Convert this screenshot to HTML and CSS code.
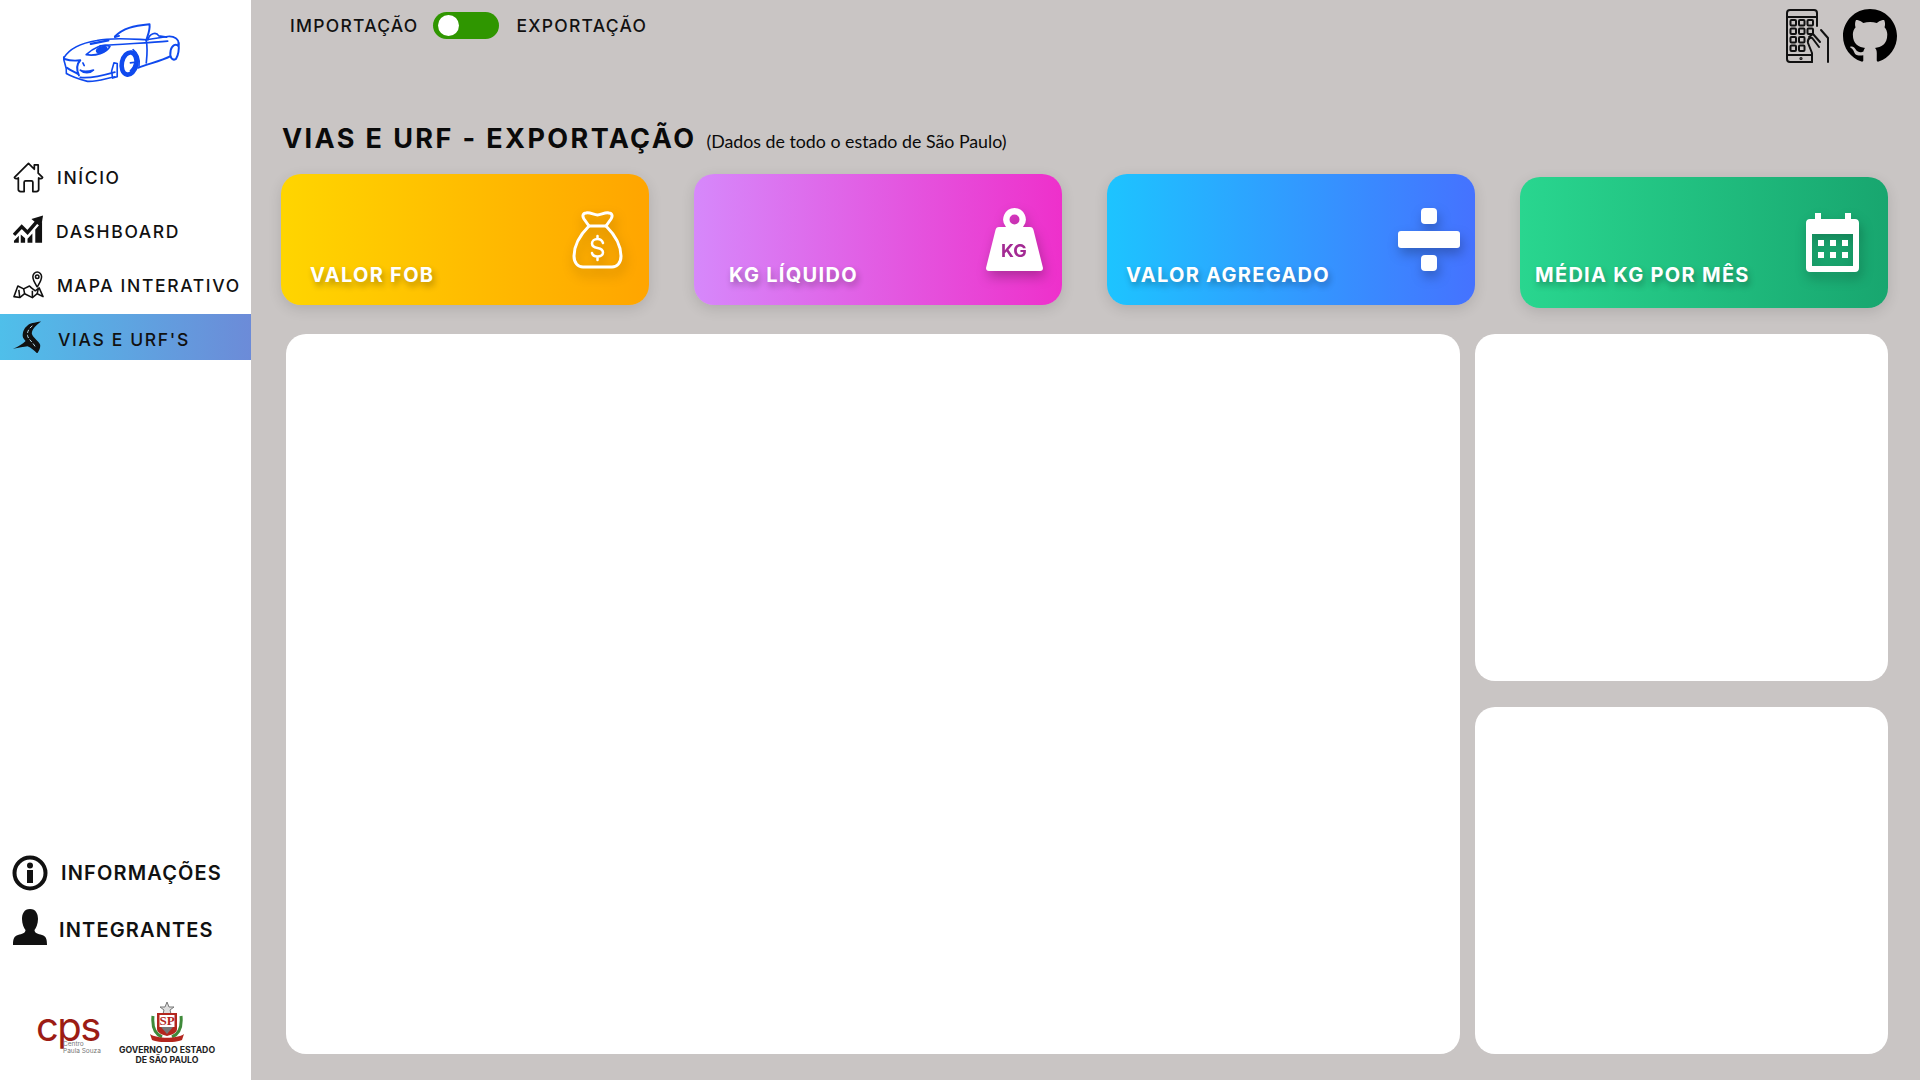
FILE: index.html
```html
<!DOCTYPE html>
<html lang="pt-BR">
<head>
  <meta charset="UTF-8">
  <title>Vias e URF's</title>
  <link rel="stylesheet" href="styles.css">
</head>
<body>
  <aside class="sidebar">
    <div class="brand">
      <svg class="car" viewBox="180 60 370 200" fill="none" stroke="#0f49ee" stroke-width="5" stroke-linecap="round" stroke-linejoin="round">
        <path d="M190 175C205 150 240 130 290 122C340 112 400 118 440 120L505 110C525 108 540 118 538 135"/>
        <path d="M190 172C188 190 200 195 198 222C215 232 240 240 262 246C290 248 320 236 345 232"/>
        <path d="M345 110C370 85 400 78 450 73C452 90 445 105 440 122" stroke-width="6"/>
        <path d="M345 112L358 108M445 120C450 100 470 95 478 108L502 112"/>
        <path d="M440 122C445 150 442 170 440 190"/>
        <path d="M300 138C360 132 450 130 505 124M400 150C420 165 420 185 418 200"/>
        <path d="M415 205C450 192 490 182 512 170" stroke-width="6"/>
        <path d="M538 130C540 150 535 170 530 178C518 185 510 172 514 152C518 136 530 130 538 140" stroke-width="6"/>
        <ellipse cx="388" cy="192" rx="22" ry="34" transform="rotate(12 388 192)" stroke-width="14"/>
        <path d="M392 190L405 188C405 200 398 208 392 214" stroke-width="5"/>
        <path d="M258 165C280 145 310 130 330 140C320 160 285 170 258 165Z"/>
        <ellipse cx="305" cy="150" rx="16" ry="8" fill="#0f49ee" transform="rotate(-20 305 150)"/>
        <path d="M272 132L325 122" stroke-width="7"/>
        <path d="M192 178C210 184 225 184 240 182C228 195 228 210 236 228M200 205C215 215 225 218 234 224" stroke-width="6"/>
        <path d="M240 212C250 222 270 222 280 212C265 216 250 218 240 212ZM248 190L252 198"/>
        <path d="M335 215L342 190L352 192L352 232L338 236Z"/>
        <path d="M240 234C270 238 310 228 345 218"/>
      </svg>
    </div>

    <nav class="menu">
      <a class="menu-item">
        <svg class="menu-icon" viewBox="0 0 32 32" fill="none" stroke="#111" stroke-width="1.8" stroke-linejoin="round" stroke-linecap="round">
          <path d="M1.500 16.500L16 2L22 8V3.500H26V12L30.500 16.500C30 18 28 18 26.500 17V29C26.500 30.500 25.500 31 24 31H20.500V21.500C20.500 20.500 20 20 19 20H13C12 20 11.500 20.500 11.500 21.500V31H8C6.500 31 5.500 30.500 5.500 29V17C4 18 2 18 1.500 16.500Z"/>
        </svg>
        <span>INÍCIO</span>
      </a>
      <a class="menu-item dash">
        <svg class="menu-icon" viewBox="0 0 32 32" fill="#111">
          <path d="M1 20L9 11.500L15 17.500L24 7" fill="none" stroke="#111" stroke-width="3.500"/>
          <path d="M19 3.500L31 0L29 12Z"/>
          <path d="M1 26L6 21V28H1ZM8 19.500L12.500 23.500V28H8ZM15 24L20 18.500V28H15ZM23 14.500L30 6.500V28H23Z"/>
        </svg>
        <span>DASHBOARD</span>
      </a>
      <a class="menu-item">
        <svg class="menu-icon" viewBox="0 0 32 32" fill="none" stroke="#111" stroke-width="1.600" stroke-linejoin="round">
          <path d="M1 28L5 17L11 20L17 17L19 19L23 22L27 19L31 28L25 25L20 29L12 25L7 29Z"/>
          <path d="M11 20L12 25M20 22L20 29M6 21L7 29M26 20L25 25"/>
          <path d="M25 18C22 13 20.500 11 20.500 7.500C20.500 5 22.500 2.500 25 2.500C27.500 2.500 29.500 5 29.500 7.500C29.500 11 28 13 25 18Z"/>
          <circle cx="25" cy="7.500" r="1.800"/>
        </svg>
        <span>MAPA INTERATIVO</span>
      </a>
      <a class="menu-item active">
        <svg class="menu-icon" viewBox="0 0 32 32" fill="#111">
          <path d="M29 0C22 1 17 2 15 4C11 7 10 11 10 15C10 17 12 19 13 20C10 23 5 26 0 28C6 27 11 26 15 25.500C19 27 22 30 25 33C27 30 28.500 27 28 24C27 21 21 17 19.500 13C19 9 23 4 29 0Z"/>
          <path d="M20 4.500C16 7.500 14.500 11 15 14.500C15.500 18 20 21 23 26" fill="none" stroke="#bfe3f5" stroke-width="1" stroke-dasharray="3.500 2"/>
        </svg>
        <span>VIAS E URF'S</span>
      </a>
    </nav>

    <nav class="menu-bottom">
      <a class="menu-item big">
        <svg class="big-icon" viewBox="0 0 36 36">
          <circle cx="18" cy="18" r="15.500" fill="none" stroke="#111" stroke-width="4"/>
          <circle cx="18" cy="10.500" r="3" fill="#111"/>
          <rect x="15" y="15" width="6" height="13" fill="#111"/>
        </svg>
        <span>INFORMAÇÕES</span>
      </a>
      <a class="menu-item big person">
        <svg class="big-icon" viewBox="0 0 36 36" fill="#111">
          <path d="M18 0C24 0 26 5 26 10C26 15 24 19 22.500 21C22.500 24 26 25 30 26C34 27 35 30 35 36H1C1 30 2 27 6 26C10 25 13.500 24 13.500 21C12 19 10 15 10 10C10 5 12 0 18 0Z"/>
        </svg>
        <span>INTEGRANTES</span>
      </a>
    </nav>

    <div class="partners">
      <div class="cps">
        <span class="cps-mark">cps</span>
        <span class="cps-name">Centro<br>Paula Souza</span>
      </div>
      <div class="gov">
        <svg class="seal" viewBox="0 0 36 40">
          <path d="M18 0L20 5L25 5L21 8L22 12H14L15 8L11 5L16 5Z" fill="#ddd" stroke="#777" stroke-width="1"/>
          <path d="M4 14C3 24 6 32 13 35M32 14C33 24 30 32 23 35" fill="none" stroke="#3f8a3a" stroke-width="3"/>
          <path d="M8 11H28V27C28 31 22 33 18 34C14 33 8 31 8 27Z" fill="#b3261e"/>
          <path d="M10.500 13H25.500V25H10.500Z" fill="#fff"/>
          <path d="M12 25L18 32L24 25Z" fill="#777"/>
          <path d="M1 32C8 37 28 37 35 32L33 38C25 41 11 41 3 38Z" fill="#b3261e"/>
          <text x="18" y="23" class="seal-text">SP</text>
        </svg>
        <p>GOVERNO DO ESTADO<br>DE SÃO PAULO</p>
      </div>
    </div>
  </aside>

  <main class="content">
    <header class="topbar">
      <div class="switch-row">
        <span>IMPORTAÇÃO</span>
        <div class="switch"><div class="knob"></div></div>
        <span>EXPORTAÇÃO</span>
      </div>
      <div class="top-links">
        <svg class="phone" viewBox="0 0 44 54" fill="none" stroke="#111" stroke-width="2" stroke-linejoin="round" stroke-linecap="round">
          <path d="M26 53H4C2 53 1 52 1 50V4C1 2 2 1 4 1H28C30 1 31 2 31 4V17"/>
          <path d="M1 8H31M1 46H26"/>
          <rect x="4.500" y="11" width="5.500" height="5.500" rx="1"/><rect x="13" y="11" width="5.500" height="5.500" rx="1"/><rect x="21.500" y="11" width="5.500" height="5.500" rx="1"/>
          <rect x="4.500" y="19.500" width="5.500" height="5.500" rx="1"/><rect x="13" y="19.500" width="5.500" height="5.500" rx="1"/><rect x="21.500" y="19.500" width="5.500" height="5.500" rx="1"/>
          <rect x="4.500" y="28" width="5.500" height="5.500" rx="1"/><rect x="13" y="28" width="5.500" height="5.500" rx="1"/>
          <rect x="4.500" y="36.500" width="5.500" height="5.500" rx="1"/><rect x="13" y="36.500" width="5.500" height="5.500" rx="1"/>
          <path d="M26 53V44L22 34C21 30 25 27 27 30L33 38M35 21L42 29V53"/>
          <path d="M23 28L27 25L34 33"/>
          <circle cx="15" cy="49.500" r=".6"/>
        </svg>
        <svg class="github" viewBox="0 0 16 16" fill="#000">
          <path d="M8 0C3.580 0 0 3.580 0 8c0 3.540 2.290 6.530 5.470 7.590.4.070.55-.17.55-.38 0-.19-.01-.82-.01-1.490-2.010.37-2.530-.49-2.690-.94-.09-.23-.48-.94-.82-1.130-.28-.15-.68-.52-.01-.53.63-.01 1.080.58 1.230.82.72 1.210 1.870.87 2.330.66.07-.52.28-.87.51-1.070-1.780-.2-3.640-.89-3.640-3.950 0-.87.31-1.590.82-2.150-.08-.2-.36-1.020.08-2.120 0 0 .67-.21 2.200.82.64-.18 1.320-.27 2-.27.68 0 1.360.09 2 .27 1.530-1.040 2.200-.82 2.200-.82.44 1.100.16 1.920.08 2.120.51.56.82 1.270.82 2.150 0 3.070-1.870 3.750-3.650 3.950.29.25.54.73.54 1.480 0 1.070-.01 1.930-.01 2.200 0 .21.15.46.55.38A8.013 8.013 0 0016 8c0-4.420-3.580-8-8-8z"/>
        </svg>
      </div>
    </header>

    <h1 class="page-title">VIAS E URF - EXPORTAÇÃO <small>(Dados de todo o estado de São Paulo)</small></h1>

    <section class="cards">
      <div class="card card-fob">
        <span class="card-label">VALOR FOB</span>
        <svg class="card-icon" width="51" height="59" viewBox="0 0 51 59" fill="none" stroke="#fff" stroke-width="3" stroke-linecap="round" stroke-linejoin="round">
          <path d="M17 16L12 9C10 6 11 3 14 3C18 2 22 5 25.500 5C29 5 33 2 37 3C40 3 41 6 39 9L34 16"/>
          <path d="M17 16H34C42 24 49 33 49 46C49 53 45 57 40 57H11C6 57 2 53 2 46C2 33 9 24 17 16Z"/>
          <path d="M31 33C30 30 28 29 25.500 29C22.500 29 20 31 20 33.500C20 36.500 23 37.500 25.500 38C28 38.500 31 39.500 31 42.500C31 45 28.500 46.500 25.500 46.500C23 46.500 20.500 45.500 20 43M25.500 26V29M25.500 46.500V50" stroke-width="2.500"/>
        </svg>
      </div>
      <div class="card card-kg">
        <span class="card-label">KG LÍQUIDO</span>
        <div class="weight">
          <svg class="weight-shape" width="57" height="63" viewBox="0 0 57 63" fill="#fff">
            <path fill-rule="evenodd" d="M28.500 0A11.500 11.500 0 0 1 37 19H44C46 19 47 20 47.500 22L57 60C57 62 56 63 54 63H3C1 63 0 62 0 60L9.500 22C10 20 11 19 13 19H20A11.500 11.500 0 0 1 28.500 0ZM28.500 6.500A5 5 0 1 0 28.500 16.500A5 5 0 1 0 28.500 6.500Z"/>
          </svg>
          <span class="weight-text">KG</span>
        </div>
      </div>
      <div class="card card-agregado">
        <span class="card-label">VALOR AGREGADO</span>
        <div class="divide">
          <i class="dot"></i>
          <i class="bar"></i>
          <i class="dot"></i>
        </div>
      </div>
      <div class="card card-media">
        <span class="card-label">MÉDIA KG POR MÊS</span>
        <svg class="card-icon" width="53" height="59" viewBox="0 0 53 59" fill="#fff">
          <path fill-rule="evenodd" d="M9 0H15V6H39V0H45V6H49C51.500 6 53 7.500 53 10V55C53 57.500 51.500 59 49 59H4C1.500 59 0 57.500 0 55V10C0 7.500 1.500 6 4 6H9ZM6 21V53H47V21Z"/>
          <path d="M12 27H18V33H12ZM24 27H30V33H24ZM36 27H42V33H36ZM12 39H18V45H12ZM24 39H30V45H24ZM36 39H42V45H36Z"/>
        </svg>
      </div>
    </section>

    <section class="panels">
      <div class="panel panel-main"></div>
      <div class="panel-side">
        <div class="panel"></div>
        <div class="panel"></div>
      </div>
    </section>
  </main>
</body>
</html>
```

FILE: styles.css
```css
* {
  margin: 0;
  padding: 0;
  box-sizing: border-box;
}
body {
  display: flex;
  width: 1920px;
  height: 1080px;
  overflow: hidden;
  background: #c9c5c4;
  color: #111;
  font-family: Inter, "Liberation Sans", sans-serif;
}

/* sidebar */
.sidebar {
  display: flex;
  flex-direction: column;
  width: 251px;
  height: 1080px;
  background: #fff;
}
.brand {
  height: 154px;
  padding: 20px 0 0 60px;
}
.car {
  display: block;
  width: 123px;
  height: 66px;
}
.menu {
  display: flex;
  flex-direction: column;
  gap: 8px;
}
.menu-item {
  display: flex;
  align-items: center;
  height: 46px;
  padding-left: 13px;
  gap: 13px;
  font-size: 17.500px;
  font-weight: 500;
  letter-spacing: 1.650px;
}
.menu-icon {
  width: 31px;
  height: 32px;
  flex-shrink: 0;
}
.dash {
  gap: 12px;
}
.active {
  margin-top: -2px;
  background: linear-gradient(90deg, #4fbfea, #6c8bd8);
}
.active span {
  margin: 4px 0 0 1px;
}
.menu-bottom {
  display: flex;
  flex-direction: column;
  gap: 11px;
  margin-top: auto;
}
.big {
  padding-left: 12px;
  gap: 13px;
  font-size: 20px;
  font-weight: 600;
  letter-spacing: 1.150px;
}
.big-icon {
  width: 36px;
  height: 36px;
  flex-shrink: 0;
}
.person {
  gap: 11px;
}
.person .big-icon {
  margin-top: -7px;
}
.partners {
  display: flex;
  gap: 18px;
  height: 127px;
  padding: 59px 0 0 36px;
}
.cps {
  width: 64px;
  color: #9c1c14;
}
.cps-mark {
  display: block;
  font-size: 40px;
  line-height: 29px;
  letter-spacing: -1.500px;
  font-weight: 400;
}
.cps-name {
  display: block;
  margin: 0 0 0 27px;
  font-size: 6.500px;
  line-height: 6.500px;
  letter-spacing: 0;
  white-space: nowrap;
  color: #777;
}
.gov {
  display: flex;
  flex-direction: column;
  align-items: center;
  width: 98px;
  margin-top: -10px;
}
.seal {
  flex-shrink: 0;
  width: 36px;
  height: 40px;
}
.seal-text {
  font-family: "Liberation Serif", serif;
  font-size: 13px;
  font-weight: 700;
  text-anchor: middle;
  fill: #b3261e;
}
.gov p {
  margin-top: 3px;
  font-size: 8.700px;
  line-height: 10px;
  font-weight: 700;
  text-align: center;
  white-space: nowrap;
  color: #222;
}

/* top bar */
.content {
  flex: 1;
  padding: 0 32px 0 30px;
}
.topbar {
  display: flex;
  justify-content: space-between;
  height: 121px;
}
.switch-row {
  display: flex;
  align-items: center;
  gap: 18px;
  height: 50px;
  padding-left: 9px;
  font-size: 17.500px;
  font-weight: 500;
  letter-spacing: 1.250px;
}
.switch {
  width: 66px;
  height: 27px;
  margin-left: -4px;
  padding: 3px 5px;
  border-radius: 14px;
  background: #2f9600;
}
.knob {
  width: 21px;
  height: 21px;
  border-radius: 50%;
  background: #fff;
}
.top-links {
  display: flex;
  gap: 13px;
  height: 64px;
  margin-right: -9px;
  padding-top: 9px;
}
.phone {
  width: 44px;
  height: 54px;
}
.github {
  width: 54px;
  height: 54px;
}
.page-title {
  display: flex;
  align-items: baseline;
  gap: 10px;
  height: 53px;
  padding-left: 1px;
  font-size: 27px;
  line-height: 36px;
  font-weight: 700;
  letter-spacing: 2.400px;
  color: #0a0a0a;
}
.page-title small {
  font-family: Lato, "Open Sans", sans-serif;
  font-size: 17.800px;
  font-weight: 400;
  letter-spacing: 0;
}

/* cards */
.cards {
  display: flex;
  gap: 45px;
  height: 134px;
}
.card {
  display: flex;
  justify-content: space-between;
  align-items: center;
  width: 368px;
  height: 131px;
  border-radius: 20px;
  box-shadow: 0 4px 14px rgba(0, 0, 0, .12);
  color: #fff;
}
.card-label {
  align-self: flex-end;
  margin-bottom: 18px;
  font-size: 20px;
  font-weight: 700;
  letter-spacing: 1.300px;
  text-shadow: 2px 4px 6px rgba(0, 0, 0, .3);
}
.card-icon, .weight, .divide {
  filter: drop-shadow(2px 6px 6px rgba(0, 0, 0, .25));
}
.card-fob {
  padding: 0 26px 0 29px;
  background: linear-gradient(90deg, #ffd500, #ffa500);
}
.card-kg {
  padding: 0 19px 0 35px;
  background: linear-gradient(90deg, #d688fb, #ee30cb);
}
.card-agregado {
  padding: 0 15px 0 19px;
  background: linear-gradient(90deg, #1dc4ff, #4572ff);
}
.card-media {
  margin-top: 3px;
  padding: 0 29px 0 15px;
  background: linear-gradient(90deg, #29d68f, #18a66f);
}
.card-media .card-label {
  margin-bottom: 21px;
}
.weight {
  position: relative;
  width: 57px;
  height: 63px;
}
.weight-shape {
  display: block;
}
.weight-text {
  position: absolute;
  left: 15px;
  top: 32px;
  font-size: 18px;
  line-height: 22px;
  font-weight: 700;
  color: #a32a93;
}
.divide {
  display: flex;
  flex-direction: column;
  align-items: center;
  gap: 7px;
}
.dot {
  width: 16px;
  height: 16px;
  border-radius: 4px;
  background: #fff;
}
.bar {
  width: 62px;
  height: 17px;
  border-radius: 3px;
  background: #fff;
}

/* panels */
.panels {
  display: flex;
  gap: 15px;
  height: 720px;
  margin-top: 26px;
  padding-left: 5px;
}
.panel {
  flex: 1;
  border-radius: 20px;
  background: #fff;
}
.panel-main {
  flex: none;
  width: 1174px;
}
.panel-side {
  display: flex;
  flex-direction: column;
  gap: 26px;
  flex: 1;
}
```
